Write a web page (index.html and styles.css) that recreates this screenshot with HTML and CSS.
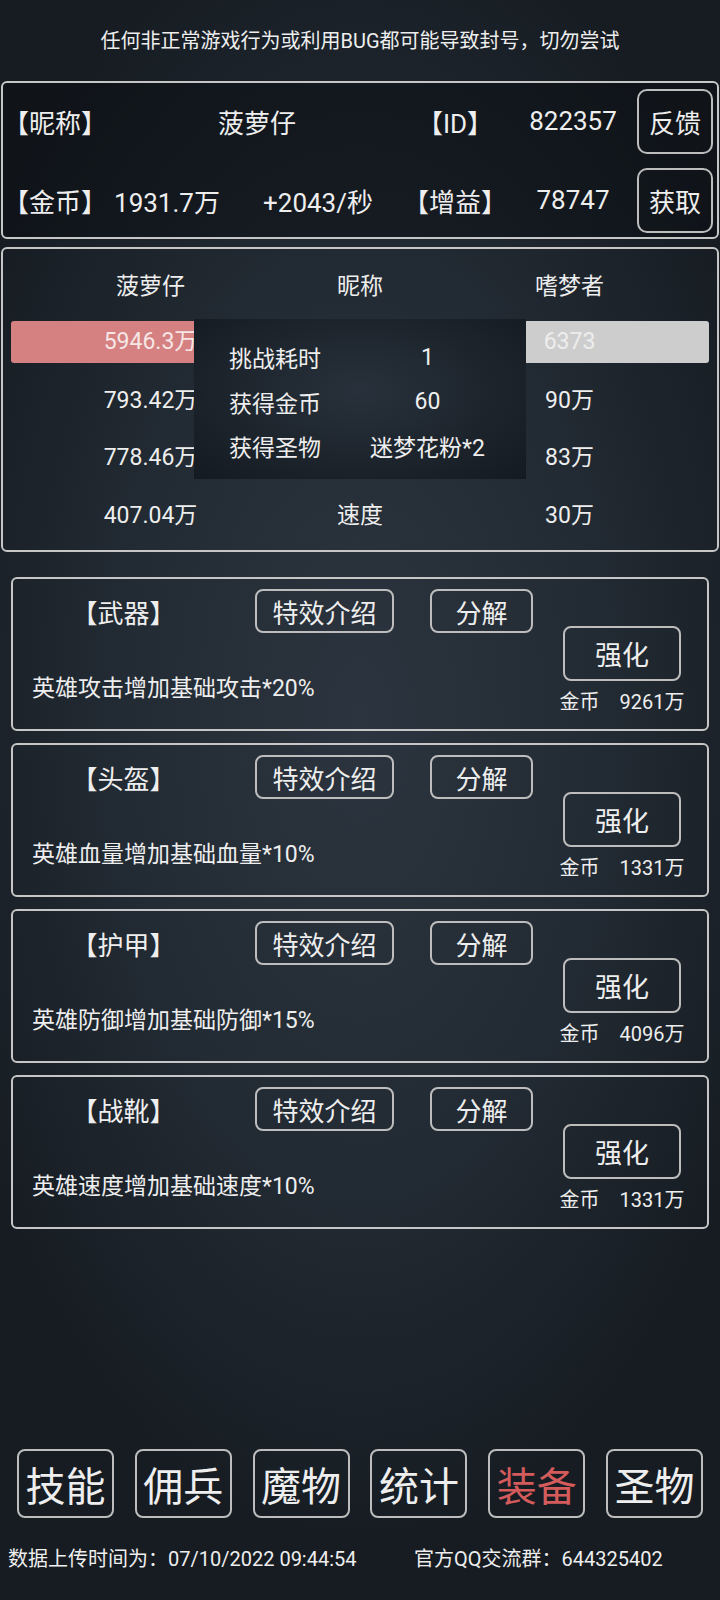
FILE: index.html
```html
<!DOCTYPE html>
<html lang="zh-CN">
<head>
  <meta charset="UTF-8" />
  <meta name="viewport" content="width=device-width, initial-scale=1" />
  <title>装备</title>
  <link rel="stylesheet" href="styles.css">
</head>
<body>
  <p class="notice">任何非正常游戏行为或利用BUG都可能导致封号，切勿尝试</p>

  <div class="info-card">
    <span class="cell">【昵称】</span>
    <span class="cell name">菠萝仔</span>
    <span class="cell">【ID】</span>
    <span class="cell">822357</span>
    <button class="btn side-btn">反馈</button>

    <span class="cell">【金币】</span>
    <span class="cell">1931.7万</span>
    <span class="cell">+2043/秒</span>
    <span class="cell">【增益】</span>
    <span class="cell">78747</span>
    <button class="btn side-btn">获取</button>
  </div>

  <div class="battle-card">
    <div class="battle-grid">
      <span>菠萝仔</span><span>昵称</span><span>嗜梦者</span>
      <span class="bar bar-hero">5946.3万</span><span></span><span class="bar bar-enemy">6373</span>
      <span>793.42万</span><span></span><span>90万</span>
      <span>778.46万</span><span></span><span>83万</span>
      <span>407.04万</span><span>速度</span><span>30万</span>
    </div>

    <div class="result">
      <span>挑战耗时</span><span class="result-val">1</span>
      <span>获得金币</span><span class="result-val">60</span>
      <span>获得圣物</span><span class="result-val">迷梦花粉*2</span>
    </div>
  </div>

  <div class="equip-list">
    <div class="equip-card">
      <div class="equip-main">
        <div class="equip-top">
          <span class="equip-title">【武器】</span>
          <button class="btn intro-btn">特效介绍</button>
          <button class="btn split-btn">分解</button>
        </div>
        <p class="equip-desc">英雄攻击增加基础攻击*20%</p>
      </div>
      <div class="equip-side">
        <button class="btn up-btn">强化</button>
        <p class="cost"><span>金币</span><span>9261万</span></p>
      </div>
    </div>

    <div class="equip-card">
      <div class="equip-main">
        <div class="equip-top">
          <span class="equip-title">【头盔】</span>
          <button class="btn intro-btn">特效介绍</button>
          <button class="btn split-btn">分解</button>
        </div>
        <p class="equip-desc">英雄血量增加基础血量*10%</p>
      </div>
      <div class="equip-side">
        <button class="btn up-btn">强化</button>
        <p class="cost"><span>金币</span><span>1331万</span></p>
      </div>
    </div>

    <div class="equip-card">
      <div class="equip-main">
        <div class="equip-top">
          <span class="equip-title">【护甲】</span>
          <button class="btn intro-btn">特效介绍</button>
          <button class="btn split-btn">分解</button>
        </div>
        <p class="equip-desc">英雄防御增加基础防御*15%</p>
      </div>
      <div class="equip-side">
        <button class="btn up-btn">强化</button>
        <p class="cost"><span>金币</span><span>4096万</span></p>
      </div>
    </div>

    <div class="equip-card">
      <div class="equip-main">
        <div class="equip-top">
          <span class="equip-title">【战靴】</span>
          <button class="btn intro-btn">特效介绍</button>
          <button class="btn split-btn">分解</button>
        </div>
        <p class="equip-desc">英雄速度增加基础速度*10%</p>
      </div>
      <div class="equip-side">
        <button class="btn up-btn">强化</button>
        <p class="cost"><span>金币</span><span>1331万</span></p>
      </div>
    </div>
  </div>

  <nav class="tabs">
    <button class="btn tab">技能</button>
    <button class="btn tab">佣兵</button>
    <button class="btn tab">魔物</button>
    <button class="btn tab">统计</button>
    <button class="btn tab active">装备</button>
    <button class="btn tab">圣物</button>
  </nav>

  <div class="footer">
    <span class="upload">数据上传时间为：07/10/2022 09:44:54</span>
    <span>官方QQ交流群：644325402</span>
  </div>
</body>
</html>
```

FILE: styles.css
```css
* {
  box-sizing: border-box;
}
body {
  margin: 0;
  width: 720px;
  min-height: 1600px;
  font-family: Roboto, "Noto Sans CJK SC", sans-serif;
  color: #eeeeee;
  background: radial-gradient(ellipse 62% 52% at 50% 45%, #2c353f 0%, #222a33 55%, #161c22 100%);
}
p {
  margin: 0;
}
.btn {
  font-family: inherit;
  color: #eeeeee;
  background: transparent;
  border: 2px solid #bdbdbd;
  border-radius: 8px;
  padding: 0;
  cursor: pointer;
}

.notice {
  padding-top: 28px;
  line-height: 26px;
  font-size: 20px;
  text-align: center;
  margin-bottom: 27px;
}

/* top info */
.info-card {
  margin: 0 1px;
  border: 2px solid #c6c6c6;
  border-radius: 6px;
  background: rgba(8, 12, 16, 0.45);
  padding: 5px 4px 4px 0;
  display: grid;
  grid-template-columns: 96px 136px 166px 108px 128px 76px;
  grid-template-rows: 66px 66px;
  row-gap: 13px;
  align-items: center;
  font-size: 26px;
}
.info-card .cell {
  text-align: center;
  white-space: nowrap;
}
.info-card .name {
  grid-column: span 2;
  padding-left: 14px;
}
.side-btn {
  height: 65px;
  font-size: 26px;
  border-radius: 10px;
}

/* battle */
.battle-card {
  position: relative;
  margin: 8px 1px 0;
  border: 2px solid #c6c6c6;
  border-radius: 6px;
  padding: 6px 8px 8px;
}
.battle-grid {
  display: grid;
  grid-template-columns: 279px 1fr 279px;
  grid-template-rows: 57px 57px 57px 58px 58px;
  align-items: center;
  text-align: center;
  font-size: 23px;
}
.bar {
  height: 42px;
  line-height: 42px;
  border-radius: 3px;
  margin-top: 2px;
}
.bar-hero {
  background: #d58081;
  color: #f6e6e6;
}
.bar-enemy {
  background: #cdcdcd;
  color: #ededed;
}
.result {
  position: absolute;
  left: 191px;
  top: 70px;
  width: 332px;
  height: 160px;
  padding: 16px 0 11px 35px;
  display: grid;
  grid-template-columns: 100px 1fr;
  grid-auto-rows: 44.5px;
  align-items: center;
  font-size: 23px;
  background: radial-gradient(ellipse at 50% 45%, #28313b 0%, #141a21 100%);
}
.result-val {
  text-align: center;
}

/* equipment */
.equip-list {
  margin: 25px 11px 0;
  display: flex;
  flex-direction: column;
  gap: 12px;
}
.equip-card {
  height: 154px;
  border: 2px solid #c6c6c6;
  border-radius: 6px;
  display: flex;
}
.equip-main {
  flex: 1;
  padding: 10px 0 0 19px;
}
.equip-top {
  display: flex;
  align-items: center;
  height: 44px;
}
.equip-title {
  width: 183px;
  text-align: center;
  font-size: 26px;
}
.intro-btn {
  margin-left: 40px;
  width: 139px;
  height: 44px;
  font-size: 26px;
}
.split-btn {
  margin-left: 36px;
  width: 103px;
  height: 44px;
  font-size: 26px;
}
.equip-desc {
  margin-top: 41px;
  line-height: 30px;
  font-size: 23px;
}
.equip-side {
  width: 130px;
  margin-right: 20px;
  padding-top: 47px;
  display: flex;
  flex-direction: column;
  align-items: center;
}
.up-btn {
  width: 118px;
  height: 55px;
  font-size: 27px;
}
.cost {
  margin-top: 9px;
  line-height: 24px;
  font-size: 20px;
  display: flex;
  gap: 20px;
}

/* bottom */
.tabs {
  margin-top: 220px;
  padding: 0 17px;
  display: flex;
  justify-content: space-between;
}
.tab {
  width: 97px;
  height: 69px;
  font-size: 40px;
}
.tab.active {
  color: #d35b5b;
}
.footer {
  margin-top: 29px;
  padding-left: 8px;
  line-height: 24px;
  font-size: 20px;
  display: flex;
}
.upload {
  width: 406px;
}
```
